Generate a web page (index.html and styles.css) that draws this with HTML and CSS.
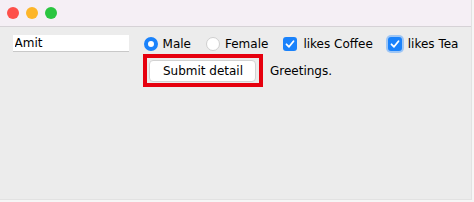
FILE: index.html
```html
<!DOCTYPE html>
<html lang="en">
<head>
  <meta charset="UTF-8">
  <title>Greetings</title>
  <link rel="stylesheet" href="styles.css">
</head>
<body>
  <div class="window">
    <div class="titlebar">
      <span class="light red"></span>
      <span class="light yellow"></span>
      <span class="light green"></span>
    </div>
    <div class="content">
      <div class="row">
        <input type="text" class="field" value="Amit">
        <label class="option radio-opt">
          <span class="radio on"></span>Male
        </label>
        <label class="option radio-opt">
          <span class="radio"></span>Female
        </label>
        <label class="option check-opt">
          <span class="check">
            <svg viewBox="0 0 14 14" width="14" height="14"><path d="M3.5 7.3 L6 9.8 L10.5 4.2" fill="none" stroke="#fff" stroke-width="1.8" stroke-linecap="round" stroke-linejoin="round"/></svg>
          </span>likes Coffee
        </label>
        <label class="option check-opt">
          <span class="check focus">
            <svg viewBox="0 0 14 14" width="14" height="14"><path d="M3.5 7.3 L6 9.8 L10.5 4.2" fill="none" stroke="#fff" stroke-width="1.8" stroke-linecap="round" stroke-linejoin="round"/></svg>
          </span>likes Tea
        </label>
      </div>
      <div class="row row-two">
        <div class="highlight">
          <button type="button" class="button">Submit detail</button>
        </div>
        <span class="greeting">Greetings.</span>
      </div>
    </div>
  </div>
</body>
</html>
```

FILE: styles.css
```css
* {
  box-sizing: border-box;
  margin: 0;
  padding: 0;
}

body {
  font-family: "DejaVu Sans", Verdana, sans-serif;
  font-size: 12px;
  color: #000;
  background-color: #f6f6f6;
}

.window {
  width: 472px;
  height: 200px;
  background-color: #ececec;
  border-bottom: 1px solid #e2e2e2;
  border-right: 1px solid #e2e2e2;
}

.titlebar {
  height: 27px;
  display: flex;
  align-items: center;
  gap: 7px;
  padding-left: 7px;
  background-color: #f5eff5;
  border-bottom: 1px solid #d6d2d6;
}

.light {
  width: 12px;
  height: 12px;
  border-radius: 50%;
}

.red {
  background-color: #fe4f4a;
}

.yellow {
  background-color: #fdb528;
}

.green {
  background-color: #2ac540;
}

.content {
  padding-top: 8px;
}

.row {
  display: flex;
  align-items: center;
  justify-content: center;
  height: 17px;
}

.field {
  width: 116px;
  height: 17px;
  border: none;
  border-bottom: 1px solid #c8c8c8;
  background-color: #fff;
  font-family: inherit;
  font-size: 12px;
  padding: 0 2px;
  color: #000;
  margin-right: 15px;
}

.option {
  display: flex;
  align-items: center;
  margin-right: 15px;
}

.option:last-child {
  margin-right: 0;
}

.radio {
  width: 14px;
  height: 14px;
  border-radius: 50%;
  background-color: #fff;
  border: 1px solid #cfcfcf;
  margin-right: 5px;
}

.radio.on {
  background-color: #fff;
  border: 4px solid #1a82fb;
}

.check {
  width: 14px;
  height: 14px;
  border-radius: 3px;
  background-color: #1a82fb;
  margin-right: 6px;
  display: flex;
}

.check.focus {
  box-shadow: 0 0 0 2px #9ec6f5;
}

.row-two {
  margin-top: 2px;
  height: 33px;
  padding-left: 4px;
}

.highlight {
  width: 120px;
  height: 33px;
  border: 4px solid #e6000e;
  display: flex;
  align-items: center;
  justify-content: center;
  margin-right: 7px;
}

.button {
  width: 107px;
  height: 22px;
  background-color: #fff;
  border: 1px solid #d2d2d2;
  border-radius: 4px;
  font-family: inherit;
  font-size: 12px;
  color: #000;
}

.greeting {
  color: #000;
}
```
